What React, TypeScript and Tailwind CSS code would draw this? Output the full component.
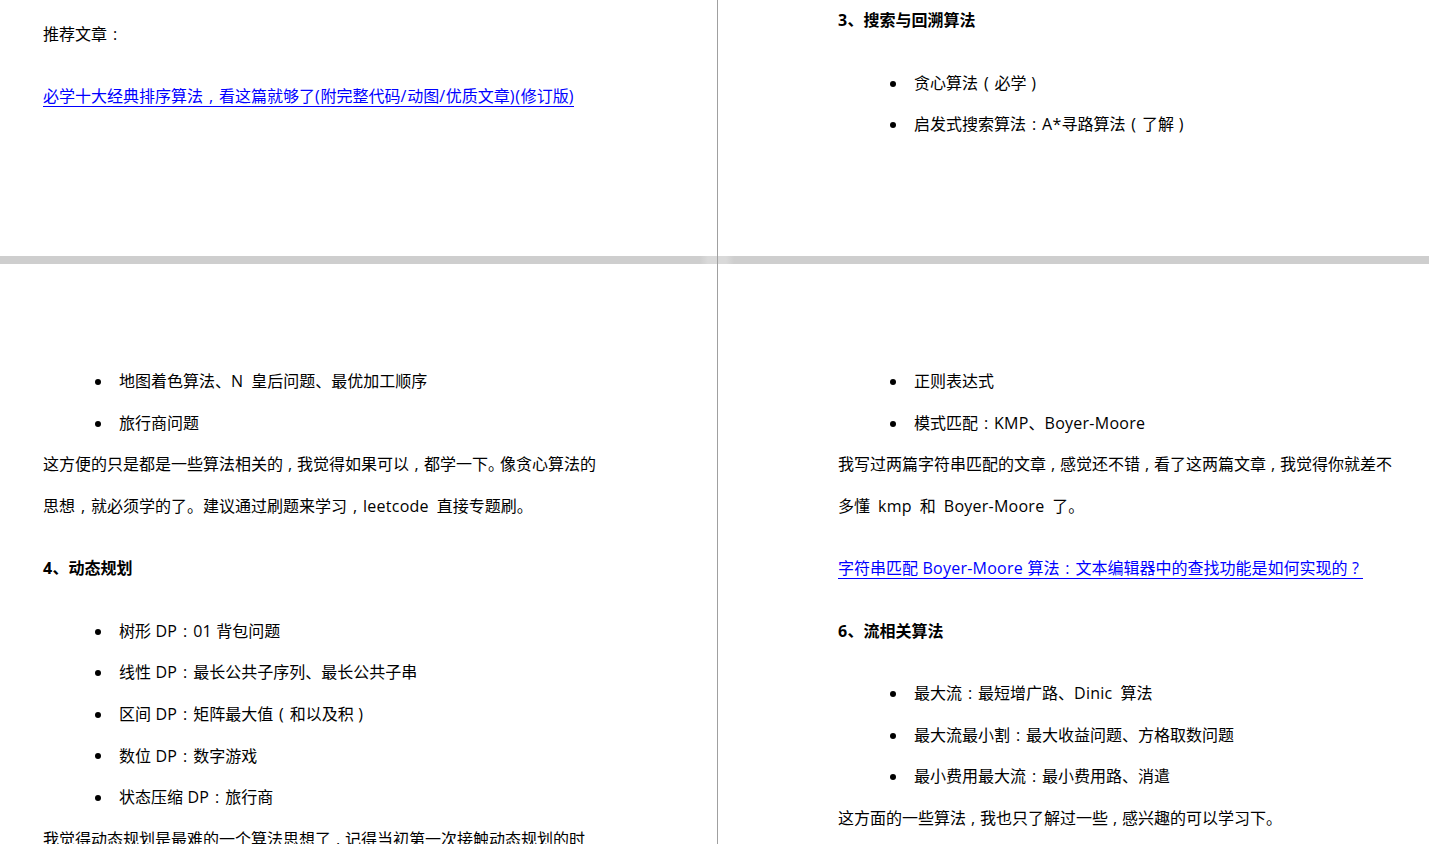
const font = "font-['Open_Sans','Noto_Sans_CJK_SC',sans-serif]";

const punct: Record<string, [string, string]> = {
  "，": [",", "w-[14px]"],
  "¦": [",", "w-[16px]"],
  "‚": [",", "w-[15px]"],
  "：": [":", "w-[16px]"],
  "（": ["(", "w-[16.5px]"],
  "）": [")", "w-[14px]"],
  "？": ["?", "w-[16px]"],
  "\u00a0\u00a0": ["", "w-[8px]"],
};

function T({ s, wide }: { s: string; wide?: boolean }) {
  const parts = s.split(/([，¦‚：（）？˳]|\u00a0\u00a0|[\x21-\x7e ]+)/).filter(Boolean);
  return (
    <>
      {parts.map((p, i) => {
        if (p === "˳") {
          return (
            <span key={i} className="tracking-[-4px]">
              。
            </span>
          );
        }
        const m = punct[p];
        if (m) {
          return (
            <span key={i} className={`inline-block text-center ${m[1]}`}>
              {m[0] || "\u00a0"}
            </span>
          );
        }
        if (/^[\x21-\x7e ]+$/.test(p)) {
          return (
            <span key={i} className={wide ? "tracking-[0.75px]" : "tracking-[0.25px]"}>
              {p}
            </span>
          );
        }
        return <span key={i}>{p}</span>;
      })}
    </>
  );
}

function Line({ s, bold, gap }: { s: string; bold?: boolean; gap?: boolean }) {
  return (
    <p className={`h-[41.6px] leading-[41.6px] whitespace-nowrap ${gap ? "mb-[20.8px]" : ""} ${bold ? "font-bold" : ""}`}>
      <T s={s} />
    </p>
  );
}

function Item({ s }: { s: string }) {
  return (
    <li className="h-[41.6px] leading-[41.6px] whitespace-nowrap flex items-center pl-[52px]">
      <span className="w-[6px] h-[6px] rounded-full bg-black mr-[18px] shrink-0" />
      <span>
        <T s={s} />
      </span>
    </li>
  );
}

function LinkLine({ s, wide }: { s: string; wide?: boolean }) {
  return (
    <div className="h-[41.6px] pt-[11px] whitespace-nowrap mb-[20.8px] flex items-start">
      <a className="block leading-[19px] border-b border-[#0000ff] text-[#0000ff]">
        <T s={s} wide={wide} />
      </a>
    </div>
  );
}

export default function App() {
  return (
    <div className={`w-[1429px] h-[844px] overflow-hidden bg-white text-black text-[16px] ${font}`}>
      <div className="grid grid-cols-[718px_711px] h-[256px]">
        <div className="border-r border-[#a0a0a0] pl-[43px] pt-[13.5px] overflow-hidden">
          <Line s="推荐文章：" gap />
          <LinkLine s="必学十大经典排序算法¦看这篇就够了(附完整代码/动图/优质文章)(修订版)" wide />
        </div>
        <div className="pl-[120px] overflow-hidden">
          <Line s="3、搜索与回溯算法" bold gap />
          <ul className="pt-[0.5px]">
            <Item s="贪心算法（必学）" />
            <Item s="启发式搜索算法：A*寻路算法（了解）" />
          </ul>
        </div>
      </div>
      <div className="grid grid-cols-[718px_711px] h-[8px]">
        <div className="border-r border-[#a0a0a0] bg-[linear-gradient(to_right,#cecece_0,#cecece_700px,#d9d9d9_708px)]" />
        <div className="bg-[linear-gradient(to_right,#d9d9d9_0,#d9d9d9_8px,#cecece_16px)]" />
      </div>
      <div className="grid grid-cols-[718px_711px] h-[580px]">
        <div className="border-r border-[#a0a0a0] pl-[43px] pt-[97.3px] overflow-hidden">
          <ul className="-ml-[43px] pl-[43px]">
            <Item s={"地图着色算法、N\u00a0\u00a0皇后问题、最优加工顺序"} />
            <Item s="旅行商问题" />
          </ul>
          <Line s="这方便的只是都是一些算法相关的，我觉得如果可以‚都学一下˳像贪心算法的" />
          <Line s={"思想¦就必须学的了。建议通过刷题来学习¦leetcode\u00a0\u00a0直接专题刷。"} gap />
          <Line s="4、动态规划" bold gap />
          <ul>
            <Item s="树形 DP：01 背包问题" />
            <Item s="线性 DP：最长公共子序列、最长公共子串" />
            <Item s="区间 DP：矩阵最大值（和以及积）" />
            <Item s="数位 DP：数字游戏" />
            <Item s="状态压缩 DP：旅行商" />
          </ul>
          <Line s="我觉得动态规划是最难的一个算法思想了，记得当初第一次接触动态规划的时" />
        </div>
        <div className="pl-[120px] pt-[97.3px] overflow-hidden">
          <ul>
            <Item s="正则表达式" />
            <Item s="模式匹配：KMP、Boyer-Moore" />
          </ul>
          <Line s="我写过两篇字符串匹配的文章，感觉还不错，看了这两篇文章，我觉得你就差不" />
          <Line s={"多懂\u00a0\u00a0kmp\u00a0\u00a0和\u00a0\u00a0Boyer-Moore\u00a0\u00a0了。"} gap />
          <LinkLine s="字符串匹配 Boyer-Moore 算法：文本编辑器中的查找功能是如何实现的？" />
          <Line s="6、流相关算法" bold gap />
          <ul>
            <Item s={"最大流：最短增广路、Dinic\u00a0\u00a0算法"} />
            <Item s="最大流最小割：最大收益问题、方格取数问题" />
            <Item s="最小费用最大流：最小费用路、消遣" />
          </ul>
          <Line s="这方面的一些算法，我也只了解过一些，感兴趣的可以学习下。" />
        </div>
      </div>
    </div>
  );
}
